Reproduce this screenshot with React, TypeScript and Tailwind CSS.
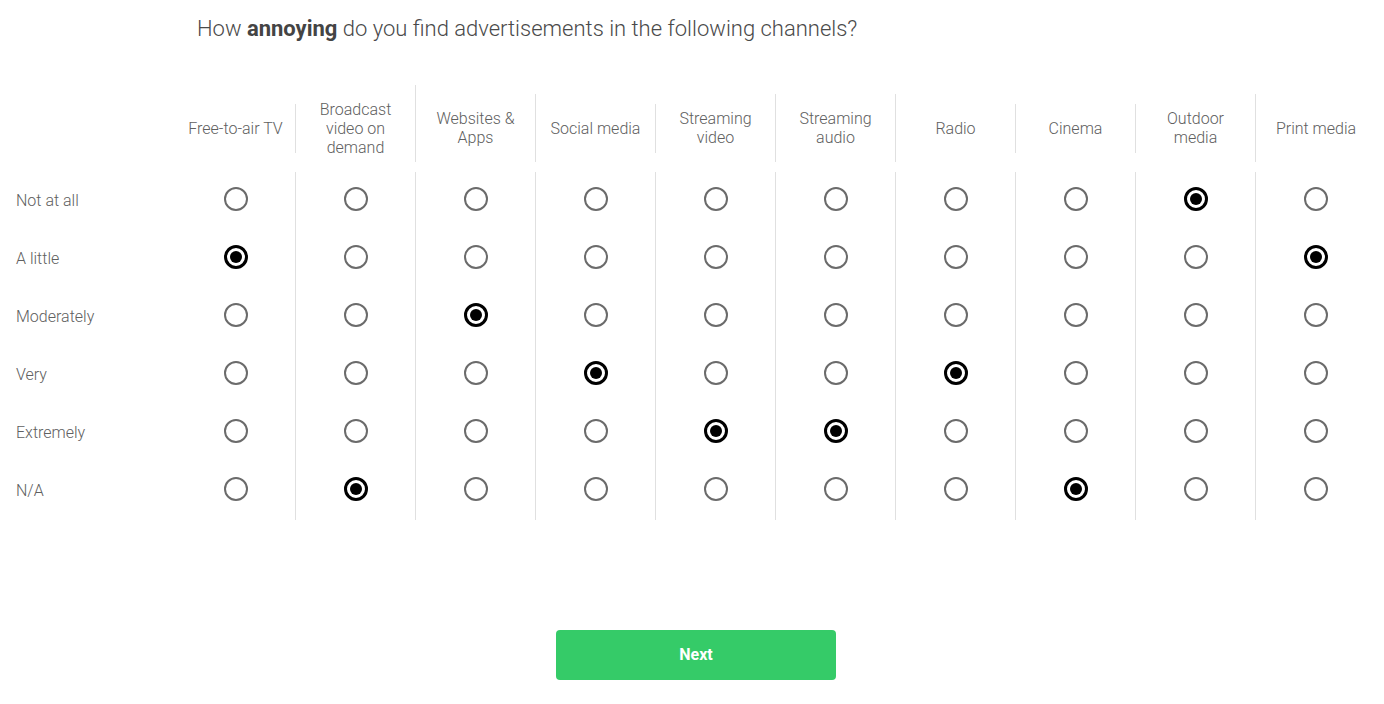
import React from "react";

const channels: { label: string[]; lines: number }[] = [
  { label: ["Free-to-air TV"], lines: 1 },
  { label: ["Broadcast", "video on", "demand"], lines: 3 },
  { label: ["Websites &", "Apps"], lines: 2 },
  { label: ["Social media"], lines: 1 },
  { label: ["Streaming", "video"], lines: 2 },
  { label: ["Streaming", "audio"], lines: 2 },
  { label: ["Radio"], lines: 1 },
  { label: ["Cinema"], lines: 1 },
  { label: ["Outdoor", "media"], lines: 2 },
  { label: ["Print media"], lines: 1 },
];

const rows = ["Not at all", "A little", "Moderately", "Very", "Extremely", "N/A"];

// selected row index per channel
const selected = [1, 5, 2, 3, 4, 4, 3, 5, 0, 1];

function Radio({ checked }: { checked: boolean }) {
  if (checked) {
    return (
      <div className="w-[24px] h-[24px] rounded-full border-[3px] border-black flex items-center justify-center">
        <div className="w-[12px] h-[12px] rounded-full bg-black" />
      </div>
    );
  }
  return <div className="w-[24px] h-[24px] rounded-full border-2 border-[#6b6b6b]" />;
}

function HeaderCell({ label, lines, last }: { label: string[]; lines: number; last: boolean }) {
  const box =
    lines === 1
      ? "mt-[19px] h-[49px]"
      : lines === 2
      ? "mt-[9px] h-[68px]"
      : "mt-0 h-[77px] pt-[9px]";
  return (
    <div className="w-[120px] h-[86px] flex flex-col">
      <div
        className={`${box} flex items-center justify-center ${
          last ? "" : "border-r border-[#e0e0e0]"
        }`}
      >
        <div className="text-center text-[16px] leading-[19px] text-[#606060] font-light">
          {label.map((l, i) => (
            <div key={i}>{l}</div>
          ))}
        </div>
      </div>
    </div>
  );
}

export default function App() {
  return (
    <div
      className="w-[1384px] h-[704px] bg-white flex flex-col"
      style={{ fontFamily: "Roboto, 'Liberation Sans', sans-serif" }}
    >
      <div className="pl-[197px] pt-[15px] h-[85px]">
        <div className="text-[22px] leading-[28px] text-[#4a4a4a] font-light">
          How <span className="font-bold text-[#444444]">annoying</span> do you find advertisements in the following channels?
        </div>
      </div>

      <div className="flex">
        <div className="w-[176px]" />
        {channels.map((c, i) => (
          <HeaderCell key={i} label={c.label} lines={c.lines} last={i === channels.length - 1} />
        ))}
      </div>

      <div className="flex flex-col mt-[1px]">
        {rows.map((r, ri) => (
          <div key={ri} className="flex h-[58px]">
            <div className="w-[176px] pl-[16px] flex items-center text-[16px] text-[#606060] font-light">
              {r}
            </div>
            {channels.map((_, ci) => (
              <div
                key={ci}
                className={`w-[120px] flex items-center justify-center ${
                  ci === channels.length - 1 ? "" : "border-r border-[#e0e0e0]"
                }`}
              >
                <div className="-mt-[4px]">
                  <Radio checked={selected[ci] === ri} />
                </div>
              </div>
            ))}
          </div>
        ))}
      </div>

      <div className="flex justify-center mt-[110px]">
        <button className="w-[280px] h-[50px] rounded-[4px] bg-[#35cb68] text-white text-[16px] font-bold ml-[8px]">
          Next
        </button>
      </div>
    </div>
  );
}
